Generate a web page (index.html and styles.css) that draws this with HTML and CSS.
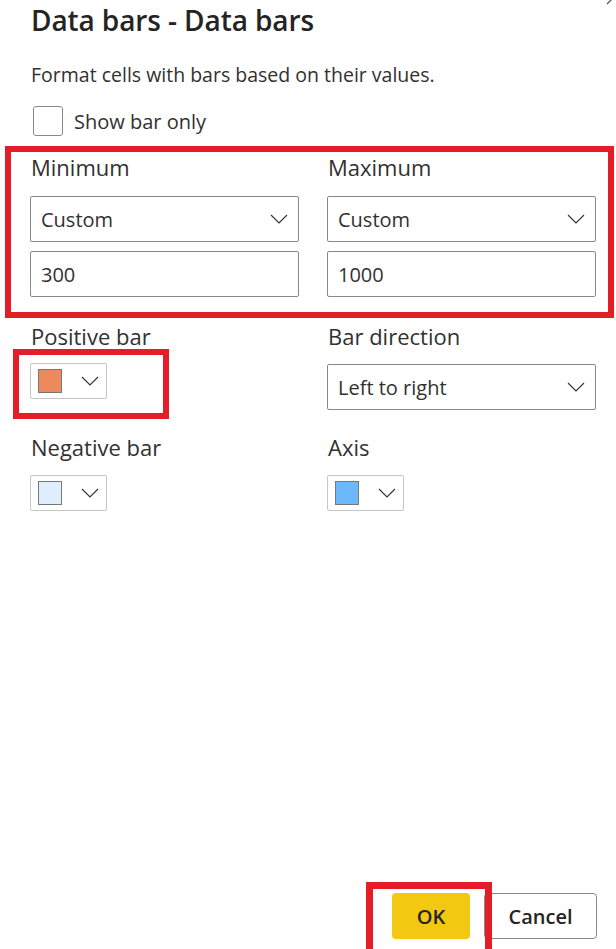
FILE: index.html
```html
<!DOCTYPE html>
<html lang="en">
  <head>
    <meta charset="UTF-8" />
    <meta name="viewport" content="width=device-width, initial-scale=1.0" />
    <title>Data bars</title>
    <link rel="stylesheet" href="styles.css">
  </head>
  <body>
    <div class="dialog">
      <svg class="close" width="20" height="20" viewBox="0 0 20 20"><path d="M3 3 L17 17 M17 3 L3 17" stroke="#605e5c" stroke-width="1.4" fill="none"/></svg>
      <h1 class="title">Data bars - Data bars</h1>
      <p class="desc">Format cells with bars based on their values.</p>
      <label class="check">
        <span class="box"></span>
        <span>Show bar only</span>
      </label>

      <div class="range mark">
        <div class="field">
          <div class="label">Minimum</div>
          <div class="select">
            <span>Custom</span>
            <svg width="18" height="10" viewBox="0 0 18 10"><path d="M1 1 L9 9 L17 1" stroke="#323130" stroke-width="1.1" fill="none"/></svg>
          </div>
          <div class="input">300</div>
        </div>
        <div class="field">
          <div class="label">Maximum</div>
          <div class="select">
            <span>Custom</span>
            <svg width="18" height="10" viewBox="0 0 18 10"><path d="M1 1 L9 9 L17 1" stroke="#323130" stroke-width="1.1" fill="none"/></svg>
          </div>
          <div class="input">1000</div>
        </div>
      </div>

      <div class="grid">
        <div class="field">
          <div class="label">Positive bar</div>
          <div class="pick-wrap mark">
            <div class="picker">
              <span class="swatch" style="background:#ec8a5d"></span>
              <svg width="18" height="10" viewBox="0 0 18 10"><path d="M1 1 L9 9 L17 1" stroke="#323130" stroke-width="1.1" fill="none"/></svg>
            </div>
          </div>
        </div>
        <div class="field">
          <div class="label">Bar direction</div>
          <div class="select">
            <span>Left to right</span>
            <svg width="18" height="10" viewBox="0 0 18 10"><path d="M1 1 L9 9 L17 1" stroke="#323130" stroke-width="1.1" fill="none"/></svg>
          </div>
        </div>
        <div class="field">
          <div class="label">Negative bar</div>
          <div class="picker">
            <span class="swatch" style="background:#deeefd"></span>
            <svg width="18" height="10" viewBox="0 0 18 10"><path d="M1 1 L9 9 L17 1" stroke="#323130" stroke-width="1.1" fill="none"/></svg>
          </div>
        </div>
        <div class="field">
          <div class="label">Axis</div>
          <div class="picker">
            <span class="swatch" style="background:#6cb8fb"></span>
            <svg width="18" height="10" viewBox="0 0 18 10"><path d="M1 1 L9 9 L17 1" stroke="#323130" stroke-width="1.1" fill="none"/></svg>
          </div>
        </div>
      </div>

      <div class="footer">
        <button class="btn ok">OK</button>
        <button class="btn cancel">Cancel</button>
      </div>
    </div>
  </body>
</html>
```

FILE: styles.css
```css
body {
    margin: 0;
    font-family: "Open Sans", "Noto Sans", sans-serif;
    color: #252423;
    background: #fff;
}
.dialog {
    position: relative;
    height: 949px;
    box-sizing: border-box;
    padding: 0 20px 10px 30px;
    display: flex;
    flex-direction: column;
    overflow: hidden;
}
.close {
    position: absolute;
    top: -13px;
    right: -8px;
}
.title {
    font-size: 28px;
    font-weight: 600;
    line-height: 36px;
    margin: 2px 0 0 1px;
    letter-spacing: -0.1px;
}
.desc {
    font-size: 19.5px;
    line-height: 24px;
    margin: 25px 0 0 1px;
    color: #323130;
}
.check {
    display: flex;
    align-items: center;
    gap: 11px;
    margin-top: 19px;
    font-size: 20px;
    color: #323130;
}
.check .box {
    width: 28px;
    height: 28px;
    margin-left: 3px;
    border: 1px solid #8a8886;
    border-radius: 3px;
}
.mark {
    border: 6px solid #e41e26;
}
.range {
    display: grid;
    grid-template-columns: 269px 269px;
    column-gap: 28px;
    margin: 10px -18px 0 -25px;
    padding: 1px 7px 15px 19px;
}
.field {
    display: flex;
    flex-direction: column;
}
.label {
    font-size: 22px;
    line-height: 28px;
    margin-left: 1px;
    color: #323130;
}
.range .label {
    margin-bottom: 15px;
}
.select, .input {
    height: 46px;
    box-sizing: border-box;
    border: 1px solid #8a8886;
    border-radius: 2px;
    padding: 0 10px;
    display: flex;
    align-items: center;
    justify-content: space-between;
    font-size: 20px;
    color: #323130;
}
.input {
    margin-top: 9px;
}
.grid {
    display: grid;
    grid-template-columns: 269px 269px;
    column-gap: 28px;
    row-gap: 14px;
    margin-top: 4px;
}
.grid .label {
    margin-bottom: 14px;
}
.pick-wrap {
    align-self: flex-start;
    margin: -15px 0 0 -17px;
    padding: 8px 56px 14px 11px;
}
.picker {
    width: 77px;
    height: 36px;
    box-sizing: border-box;
    border: 1px solid #c8c6c4;
    border-radius: 2px;
    display: flex;
    align-items: center;
    gap: 19px;
    padding-left: 7px;
}
.swatch {
    width: 24px;
    height: 24px;
    box-sizing: border-box;
    border: 1px solid #7a7874;
}
.footer {
    margin-top: auto;
    display: flex;
    justify-content: flex-end;
    gap: 14px;
    margin-right: -1px;
}
.btn {
    height: 46px;
    font-family: inherit;
    font-size: 20px;
    font-weight: 600;
    border-radius: 4px;
    color: #252423;
}
.ok {
    position: relative;
    width: 78px;
    border: none;
    background: #f2c811;
}
.ok::after {
    content: "";
    position: absolute;
    left: -26px;
    right: -22px;
    top: -11px;
    bottom: -20px;
    border: 7px solid #e41e26;
    z-index: 1;
}
.cancel {
    width: 113px;
    border: 1px solid #8a8886;
    background: #fff;
}
```
